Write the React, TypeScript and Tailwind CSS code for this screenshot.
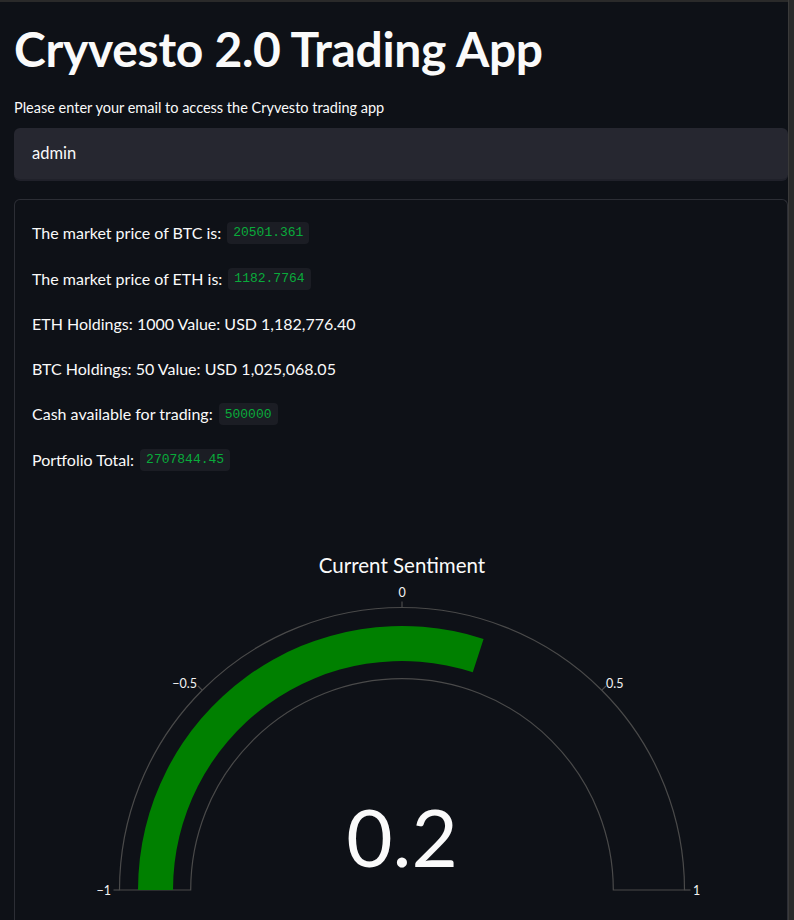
import React from "react";

function Code({ children }: { children: React.ReactNode }) {
  return (
    <span className="inline-flex items-center h-[22px] px-[6px] rounded-[4px] bg-[#1b1d24] text-[#09ab3b] text-[13px] font-['Liberation_Mono','DejaVu_Sans_Mono',monospace]">
      {children}
    </span>
  );
}

function Row({ children }: { children: React.ReactNode }) {
  return <div className="h-[28px] flex items-center gap-[6px] text-[16px] text-[#fafafa]">{children}</div>;
}

function Gauge() {
  const tick = "#4a4a4a";
  return (
    <svg className="block -mx-[17px] fill-[#f2f2f2] text-[12.5px]" width={772} height={422} viewBox="15 498 772 422">
      <text x={402} y={573} textAnchor="middle" className="text-[20.5px] fill-[#fafafa]">
        Current Sentiment
      </text>
      <path
        d="M119.5 890 A282.5 282.5 0 0 1 402 607.5 A282.5 282.5 0 0 1 684.5 890 L613.3 890 A211.3 211.3 0 0 0 402 678.7 A211.3 211.3 0 0 0 190.7 890 Z"
        fill="none"
        stroke={tick}
        strokeWidth={1.2}
      />
      <path d="M138 890 A264 264 0 0 1 483.58 638.92 L472.77 672.21 A229 229 0 0 0 173 890 Z" fill="#008000" />
      <line x1={402} y1={607.5} x2={402} y2={601.5} stroke={tick} strokeWidth={1.2} />
      <line x1={202.2} y1={690.2} x2={198} y2={686} stroke={tick} strokeWidth={1.2} />
      <line x1={601.8} y1={690.2} x2={606} y2={686} stroke={tick} strokeWidth={1.2} />
      <line x1={119.5} y1={890} x2={113.5} y2={890} stroke={tick} strokeWidth={1.2} />
      <line x1={684.5} y1={890} x2={690.5} y2={890} stroke={tick} strokeWidth={1.2} />
      <text x={402} y={597} textAnchor="middle">0</text>
      <text x={197} y={687.5} textAnchor="end">−0.5</text>
      <text x={606} y={687.5} textAnchor="start">0.5</text>
      <text x={111} y={894.5} textAnchor="end">−1</text>
      <text x={693} y={894.5} textAnchor="start">1</text>
      <text x={402} y={866.5} textAnchor="middle" className="text-[80px] fill-[#fafafa]">
        0.2
      </text>
    </svg>
  );
}

export default function App() {
  return (
    <div className="w-[794px] h-[920px] overflow-hidden bg-[#0e1117] flex font-['Lato','Noto_Sans',sans-serif]">
      <div className="flex-1 flex flex-col border-t-2 border-[#2a2a2a] pl-[14px] overflow-hidden">
        <h1 className="mt-[17px] text-[48px] leading-[60px] font-bold text-[#fafafa] tracking-[-0.3px]">
          Cryvesto 2.0 Trading App
        </h1>
        <p className="mt-[19px] text-[14.5px] leading-[20px] text-[#fafafa]">
          Please enter your email to access the Cryvesto trading app
        </p>
        <div className="mt-[10px] h-[55px] rounded-[6px] bg-[#262730] border-b-2 border-[#20212a] flex items-center px-[18px] text-[16.5px] text-[#fafafa]">
          admin
        </div>
        <div className="mt-[18px] flex-1 rounded-t-[6px] border border-b-0 border-[#2c2e35] pt-[19px] pl-[17px] flex flex-col gap-[17.3px]">
          <Row>
            <span>The market price of BTC is:</span>
            <Code>20501.361</Code>
          </Row>
          <Row>
            <span>The market price of ETH is:</span>
            <Code>1182.7764</Code>
          </Row>
          <Row>
            <span>ETH Holdings: 1000 Value: USD 1,182,776.40</span>
          </Row>
          <Row>
            <span>BTC Holdings: 50 Value: USD 1,025,068.05</span>
          </Row>
          <Row>
            <span>Cash available for trading:</span>
            <Code>500000</Code>
          </Row>
          <Row>
            <span>Portfolio Total:</span>
            <Code>2707844.45</Code>
          </Row>
          <div className="mt-[7px]">
            <Gauge />
          </div>
        </div>
      </div>
      <div className="w-[6px] h-full bg-[#2a2a2a] border-l border-[#3a3a3a]" />
    </div>
  );
}
